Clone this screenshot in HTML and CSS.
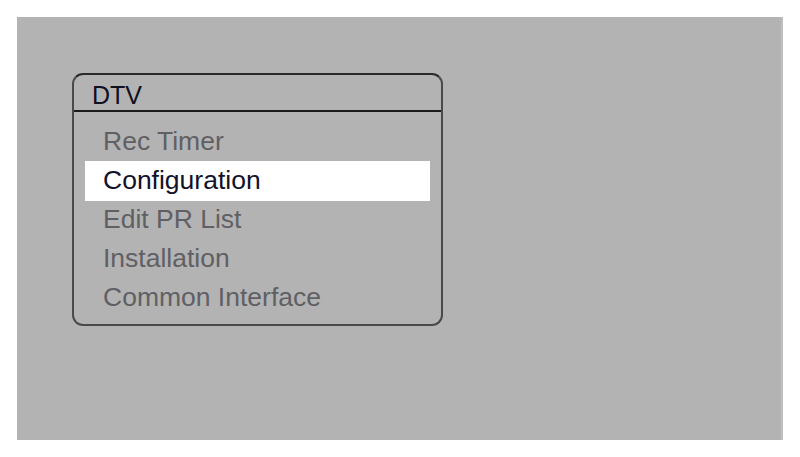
FILE: index.html
```html
<!DOCTYPE html>
<html>
<head>
<meta charset="utf-8">
<link rel="stylesheet" href="styles.css">
</head>
<body>
<div class="screen">
  <div class="menu">
    <div class="menu-title">DTV</div>
    <ul class="menu-list">
      <li class="item">Rec Timer</li>
      <li class="item selected">Configuration</li>
      <li class="item">Edit PR List</li>
      <li class="item">Installation</li>
      <li class="item">Common Interface</li>
    </ul>
  </div>
</div>
</body>
</html>
```
FILE: styles.css
```css
html, body {
  margin: 0;
  padding: 0;
  background: #ffffff;
}
body {
  width: 800px;
  height: 457px;
  overflow: hidden;
  font-family: "Liberation Sans", Arial, sans-serif;
}
.screen {
  margin: 17px 0 0 17px;
  width: 766px;
  height: 423px;
  background: #b3b3b3;
  box-shadow: inset -3px 0 2px -1px #c0c0c4;
  padding: 56px 0 0 55px;
  box-sizing: border-box;
}
.menu {
  width: 371px;
  height: 253px;
  box-sizing: border-box;
  border: 2px solid #4a4a4a;
  border-top-color: #2a2a2a;
  border-radius: 11px;
}
.menu-title {
  height: 37px;
  box-sizing: border-box;
  padding: 6px 0 0 18px;
  font-size: 25px;
  line-height: 29px;
  color: #10101e;
  border-bottom: 2px solid #1a1a1a;
}
.menu-list {
  list-style: none;
  margin: 0;
  padding: 10px 11px 0 11px;
}
.item {
  height: 39px;
  line-height: 39px;
  font-size: 26.5px;
  color: #606064;
  padding-left: 18px;
}
.item.selected {
  background: #ffffff;
  color: #12122a;
  height: 40px;
  margin-bottom: -1px;
}
```
